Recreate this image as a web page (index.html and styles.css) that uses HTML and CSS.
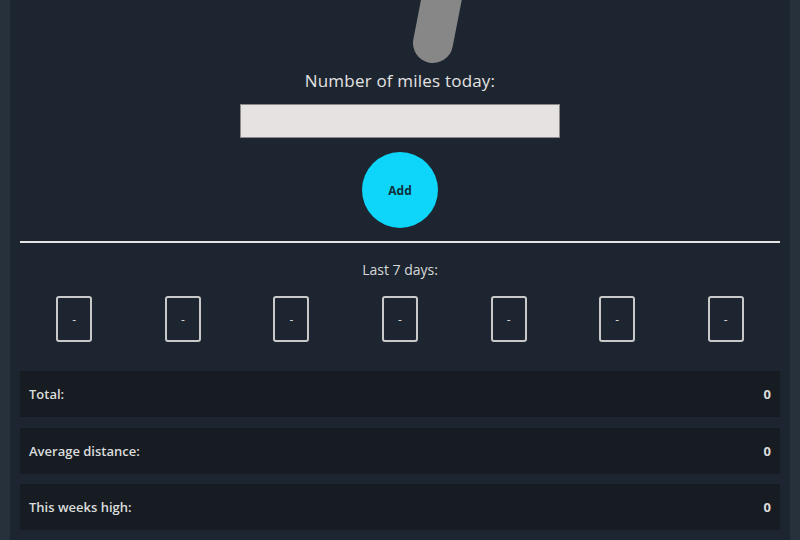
FILE: index.html
```html
<!DOCTYPE html>
<html>
<head>
<meta charset="utf-8">
<link rel="stylesheet" href="styles.css">
</head>
<body>
<main class="panel">
  <div class="gauge">
    <svg class="needle" width="200" height="71" viewBox="0 0 200 71">
      <rect x="113" y="-90" width="40" height="153" rx="20" fill="#878787" transform="rotate(11 133 43)"/>
    </svg>
  </div>
  <label class="title" for="miles">Number of miles today:</label>
  <input id="miles" class="miles-input" type="text">
  <button class="add-btn">Add</button>
  <hr class="divider">
  <div class="week-title">Last 7 days:</div>
  <div class="days">
    <div class="day"><span class="day-box">-</span></div>
    <div class="day"><span class="day-box">-</span></div>
    <div class="day"><span class="day-box">-</span></div>
    <div class="day"><span class="day-box">-</span></div>
    <div class="day"><span class="day-box">-</span></div>
    <div class="day"><span class="day-box">-</span></div>
    <div class="day"><span class="day-box">-</span></div>
  </div>
  <div class="stats">
    <div class="stat"><span>Total:</span><span class="val">0</span></div>
    <div class="stat"><span>Average distance:</span><span class="val">0</span></div>
    <div class="stat"><span>This weeks high:</span><span class="val">0</span></div>
  </div>
</main>
</body>
</html>
```
FILE: styles.css
```css
html, body {
  margin: 0;
  padding: 0;
}
body {
  background: #27313b;
  padding: 0 10px;
  font-family: "Open Sans", "Liberation Sans", sans-serif;
  color: #e4e2e2;
  overflow: hidden;
}
.panel {
  background: #1d2630;
  padding: 0 10px 20px;
  display: flex;
  flex-direction: column;
  align-items: center;
  min-height: 540px;
  box-sizing: border-box;
}
.gauge {
  height: 71px;
  width: 100%;
  display: flex;
  justify-content: center;
}
.needle {
  display: block;
  overflow: visible;
}
.title {
  font-size: 17px;
  font-weight: 400;
  line-height: 22px;
  height: 22px;
  margin-top: -1px;
  letter-spacing: 0.2px;
}
.miles-input {
  margin-top: 12px;
  width: 320px;
  height: 34px;
  box-sizing: border-box;
  background: #e6e2e2;
  border: 1px solid #8a8a8a;
  border-radius: 0;
  padding: 0 6px;
}
.add-btn {
  margin-top: 14px;
  width: 76px;
  height: 76px;
  border-radius: 50%;
  border: none;
  background: #0dd6fa;
  color: #10303a;
  font-family: "Open Sans", "Liberation Sans", sans-serif;
  font-weight: 700;
  font-size: 12px;
  padding: 0;
}
.divider {
  align-self: stretch;
  margin: 13px 0 0;
  height: 2px;
  border: none;
  background: #e6e6e6;
}
.week-title {
  margin-top: 18px;
  font-size: 14px;
  line-height: 18px;
  color: #d8d8d8;
}
.days {
  align-self: stretch;
  margin-top: 17px;
  display: grid;
  grid-template-columns: repeat(7, 1fr);
}
.day {
  display: flex;
  justify-content: center;
}
.day-box {
  width: 36px;
  height: 46px;
  box-sizing: border-box;
  border: 2px solid #c9c9c9;
  border-radius: 3px;
  display: flex;
  align-items: center;
  justify-content: center;
  font-size: 12px;
  color: #d8d8d8;
}
.stats {
  align-self: stretch;
  margin-top: 29px;
  display: flex;
  flex-direction: column;
  gap: 10.5px;
}
.stat {
  height: 46px;
  background: #161c22;
  display: flex;
  align-items: center;
  justify-content: space-between;
  padding: 0 9px;
  font-size: 13px;
  font-weight: 600;
  color: #dcdcdc;
}
.val {
  font-weight: 700;
  font-size: 13px;
}
```
